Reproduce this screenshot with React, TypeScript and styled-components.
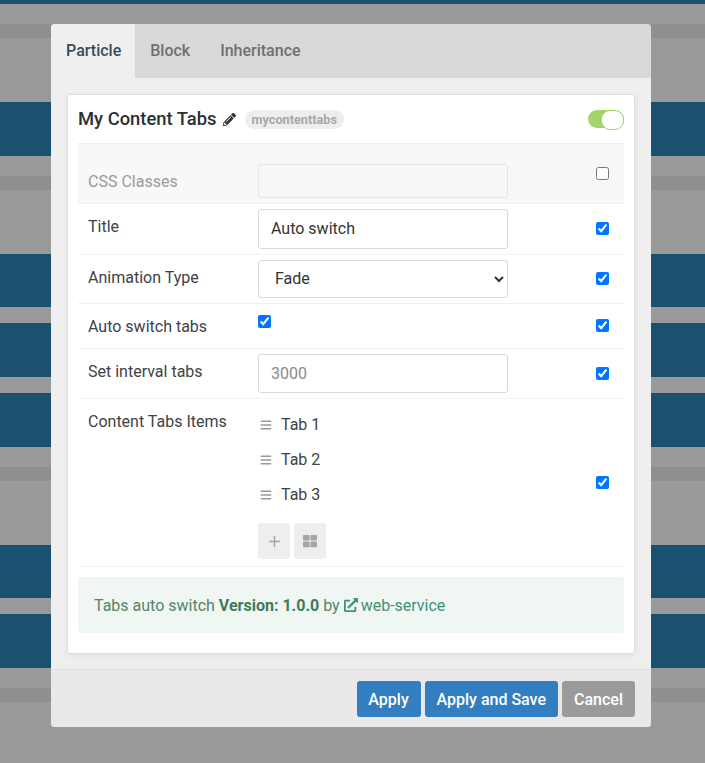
import React from "react";
import styled, { createGlobalStyle } from "styled-components";
import { FaBars, FaExternalLinkAlt, FaPencilAlt, FaThLarge } from "react-icons/fa";
import { FiPlus } from "react-icons/fi";

const GlobalStyle = createGlobalStyle`
  html, body {
    margin: 0;
    height: 763px;
    overflow: hidden;
    background: #9a9a9a;
    font-family: Roboto, "Liberation Sans", sans-serif;
  }
  * { box-sizing: border-box; }
`;

const bandColors = { navy: "#1a5070", gray: "#9a9a9a", dark: "#8f8f8f" };

const bands: [keyof typeof bandColors, number][] = [
  ["navy", 4], ["gray", 20], ["dark", 14], ["gray", 64],
  ["navy", 54], ["gray", 20], ["dark", 14], ["gray", 64],
  ["navy", 53], ["gray", 16],
  ["navy", 54], ["gray", 16],
  ["navy", 54], ["gray", 20], ["dark", 14], ["gray", 64],
  ["navy", 53], ["gray", 16],
  ["navy", 54], ["gray", 20], ["dark", 14], ["gray", 61],
];

const Backdrop = styled.div`
  display: flex;
  flex-direction: column;
  height: 763px;
`;

const Band = styled.div<{ $color: string; $height: number }>`
  flex: none;
  height: ${(p) => p.$height}px;
  background: ${(p) => p.$color};
`;

const Modal = styled.div`
  position: absolute;
  left: 51px;
  top: 24px;
  width: 600px;
  height: 703px;
  display: flex;
  flex-direction: column;
  border-radius: 4px;
  overflow: hidden;
  background: #efefef;
`;

const TabBar = styled.div`
  display: flex;
  height: 54px;
  flex: none;
  background: #d9d9d9;
`;

const Tab = styled.div<{ $active?: boolean }>`
  display: flex;
  align-items: center;
  padding: 0 ${(p) => (p.$active ? 14 : 15)}px 2px 15px;
  font-size: 16px;
  font-weight: 500;
  color: ${(p) => (p.$active ? "#3b4a5a" : "#6f6f6f")};
  background: ${(p) => (p.$active ? "#efefef" : "transparent")};
`;

const Body = styled.div`
  flex: 1;
  padding: 16px 16px 15px;
`;

const Card = styled.div`
  height: 560px;
  padding: 0 10px;
  background: #fff;
  border: 1px solid #ddd;
  border-radius: 3px;
  box-shadow: 0 2px 6px rgba(0, 0, 0, 0.06);
`;

const CardHeader = styled.div`
  display: flex;
  align-items: center;
  height: 48px;
`;

const CardTitle = styled.span`
  margin-bottom: 2px;
  font-size: 18.4px;
  font-weight: 500;
  color: #2b2f33;
`;

const EditIcon = styled(FaPencilAlt)`
  margin-left: 6px;
  font-size: 13px;
  color: #333;
`;

const Badge = styled.span`
  margin-left: 9px;
  padding: 0 7px;
  height: 19px;
  line-height: 19px;
  border-radius: 10px;
  background: #eee;
  color: #a8a8a8;
  font-size: 12.7px;
  font-weight: 700;
`;

const Toggle = styled.span`
  position: relative;
  margin-left: auto;
  width: 36px;
  height: 18px;
  border-radius: 9px;
  background: #a2d56a;

  &::after {
    content: "";
    position: absolute;
    right: 0;
    top: 0;
    width: 21px;
    height: 18px;
    border-radius: 9px;
    background: #fff;
    border: 1px solid #a2d56a;
  }
`;

const Row = styled.div<{ $muted?: boolean; $pad?: string }>`
  display: grid;
  grid-template-columns: 170px 250px 1fr;
  padding: ${(p) => p.$pad || "5px 0"};
  padding-left: 10px;
  background: ${(p) => (p.$muted ? "#f8f8f8" : "#fff")};
  border-top: ${(p) => (p.$muted ? "1px solid #eee" : "none")};
  border-bottom: 1px solid #f0f0f0;
`;

const Label = styled.div<{ $muted?: boolean; $top?: number }>`
  padding-top: ${(p) => p.$top ?? 7}px;
  font-size: 16px;
  line-height: 22px;
  color: ${(p) => (p.$muted ? "#9a9a9a" : "#3e4247")};
`;

const TextInput = styled.input<{ $height?: number }>`
  width: 250px;
  height: ${(p) => p.$height ?? 40}px;
  padding: 0 12px 1px;
  border: 1px solid #d9d9d9;
  border-radius: 3px;
  background: #fff;
  color: #333;
  font-family: inherit;
  font-size: 16px;
  outline: none;

  &::placeholder {
    color: #8a8a8a;
  }

  &:disabled {
    background: #f8f8f8;
    border-color: #e6e6e6;
  }
`;

const SelectInput = styled.select`
  width: 250px;
  height: 38px;
  padding: 0 12px 2px;
  border: 1px solid #d9d9d9;
  border-radius: 3px;
  background: #fff;
  color: #333;
  font-family: inherit;
  font-size: 16px;
  outline: none;
`;

const Check = styled.input.attrs({ type: "checkbox", readOnly: true })`
  width: 13px;
  height: 13px;
  margin: 0;
`;

const RowCheck = styled(Check)<{ $shift?: number }>`
  align-self: center;
  justify-self: end;
  margin-right: 15px;
  margin-top: ${(p) => Math.max((p.$shift ?? 0) * 2, 0)}px;
  margin-bottom: ${(p) => Math.max(-(p.$shift ?? 0) * 2, 0)}px;
`;

const InlineCheck = styled(Check)`
  margin-top: 6px;
`;

const Items = styled.div`
  display: flex;
  flex-direction: column;
`;

const Item = styled.div`
  display: flex;
  align-items: center;
  height: 35px;
  font-size: 16px;
  color: #3e4247;
`;

const Grip = styled(FaBars)`
  width: 12px;
  height: 12px;
  margin: 0 9px 0 2px;
  color: #999;
`;

const ItemActions = styled.div`
  display: flex;
  gap: 4px;
  margin-top: 11px;
`;

const ActionButton = styled.span`
  display: flex;
  align-items: center;
  justify-content: center;
  width: 32px;
  height: 36px;
  border-radius: 3px;
  background: #eee;
  color: #a5a5a5;
  font-size: 14px;
`;

const PlusIcon = styled(FiPlus)`
  font-size: 17px;
`;

const InfoBox = styled.div`
  display: flex;
  align-items: center;
  margin-top: 10px;
  height: 56px;
  padding: 0 16px;
  border-radius: 3px;
  background: #f0f6f2;
  color: #52856b;
  font-size: 16px;
  white-space: pre;

  b {
    font-weight: 700;
    color: #3f7a5c;
  }
`;

const InfoLink = styled.span`
  display: inline-flex;
  align-items: center;
  gap: 3px;
  color: #3f917a;

  svg {
    font-size: 14px;
  }
`;

const Footer = styled.div`
  flex: none;
  display: flex;
  justify-content: flex-end;
  gap: 4px;
  height: 58px;
  padding: 11px 16px 0;
  border-top: 1px solid #ddd;
  background: #e9e9e9;
`;

const Button = styled.button<{ $grey?: boolean }>`
  height: 36px;
  padding: 0 12px;
  border: none;
  border-radius: 3px;
  background: ${(p) => (p.$grey ? "#9a9a9a" : "#337ec0")};
  color: #fff;
  font-family: inherit;
  font-size: 16px;
  font-weight: 500;
`;

const FirstButton = styled(Button)`
  width: 64px;
  padding: 0;
`;

export default function App() {
  return (
    <>
      <GlobalStyle />
      <Backdrop>
        {bands.map(([color, height], i) => (
          <Band key={i} $color={bandColors[color]} $height={height} />
        ))}
      </Backdrop>
      <Modal>
        <TabBar>
          <Tab $active>Particle</Tab>
          <Tab>Block</Tab>
          <Tab>Inheritance</Tab>
        </TabBar>
        <Body>
          <Card>
            <CardHeader>
              <CardTitle>My Content Tabs</CardTitle>
              <EditIcon />
              <Badge>mycontenttabs</Badge>
              <Toggle />
            </CardHeader>
            <Row $muted $pad="20px 0 5px">
              <Label $muted>CSS Classes</Label>
              <TextInput disabled $height={34} />
              <RowCheck $shift={-8} />
            </Row>
            <Row>
              <Label>Title</Label>
              <TextInput defaultValue="Auto switch" />
              <RowCheck defaultChecked $shift={-1} />
            </Row>
            <Row>
              <Label>Animation Type</Label>
              <SelectInput defaultValue="Fade">
                <option>Fade</option>
              </SelectInput>
              <RowCheck defaultChecked $shift={-1} />
            </Row>
            <Row $pad="5px 0 10px">
              <Label>Auto switch tabs</Label>
              <div>
                <InlineCheck defaultChecked />
              </div>
              <RowCheck defaultChecked $shift={2} />
            </Row>
            <Row>
              <Label>Set interval tabs</Label>
              <TextInput placeholder="3000" $height={39} />
              <RowCheck defaultChecked />
            </Row>
            <Row $pad="8px 0 7px">
              <Label $top={4}>Content Tabs Items</Label>
              <Items>
                {["Tab 1", "Tab 2", "Tab 3"].map((tab) => (
                  <Item key={tab}>
                    <Grip />
                    {tab}
                  </Item>
                ))}
                <ItemActions>
                  <ActionButton>
                    <PlusIcon />
                  </ActionButton>
                  <ActionButton>
                    <FaThLarge />
                  </ActionButton>
                </ItemActions>
              </Items>
              <RowCheck defaultChecked $shift={-1} />
            </Row>
            <InfoBox>
              Tabs auto switch <b>Version: 1.0.0</b> by{" "}
              <InfoLink>
                <FaExternalLinkAlt />
                web-service
              </InfoLink>
            </InfoBox>
          </Card>
        </Body>
        <Footer>
          <FirstButton>Apply</FirstButton>
          <Button>Apply and Save</Button>
          <Button $grey>Cancel</Button>
        </Footer>
      </Modal>
    </>
  );
}
